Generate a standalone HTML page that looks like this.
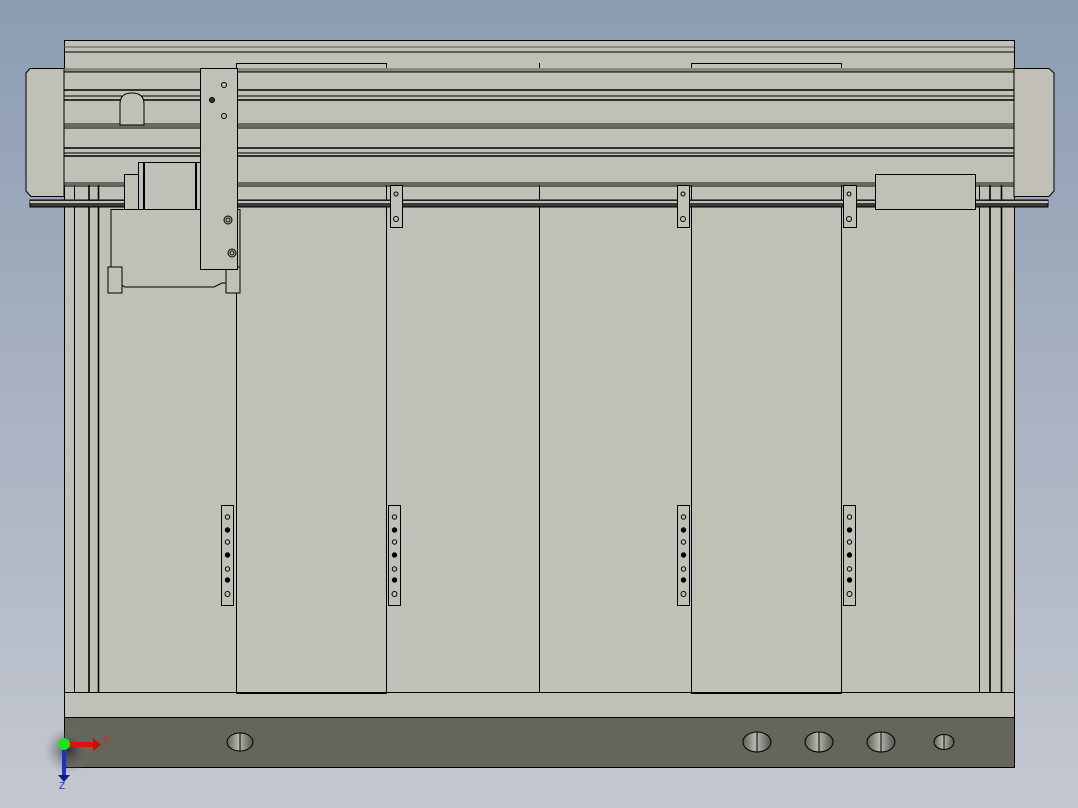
<!DOCTYPE html>
<html><head><meta charset="utf-8"><style>
html,body{margin:0;padding:0;width:1078px;height:808px;overflow:hidden;background:linear-gradient(#8d9cb2,#c4c8d0);}
svg{display:block}
</style></head><body>
<svg width="1078" height="808" viewBox="0 0 1078 808" xmlns="http://www.w3.org/2000/svg">
<defs>
<linearGradient id="hole" x1="0" x2="1"><stop offset="0" stop-color="#5f5f58"/><stop offset="0.45" stop-color="#b8b8b0"/><stop offset="1" stop-color="#55554e"/></linearGradient>
<radialGradient id="sh"><stop offset="0" stop-color="#222" stop-opacity=".8"/><stop offset="1" stop-color="#888" stop-opacity="0"/></radialGradient>
</defs>
<g stroke="#000" stroke-width="1" fill="#c0c0b6">
<!-- main frame -->
<rect x="64.5" y="40.5" width="950" height="727"/>
<line x1="64" y1="47" x2="1014" y2="47" stroke="#555"/>
<line x1="64" y1="52" x2="1014" y2="52"/>
<!-- inner verticals -->
<line x1="74.5" y1="182" x2="74.5" y2="692"/>
<line x1="89" y1="182" x2="89" y2="692" stroke-width="1.6"/>
<line x1="98.5" y1="182" x2="98.5" y2="692" stroke-width="1.6"/>
<line x1="979.5" y1="182" x2="979.5" y2="692"/>
<line x1="990" y1="182" x2="990" y2="692" stroke-width="1.6"/>
<line x1="1001.5" y1="182" x2="1001.5" y2="692" stroke-width="1.6"/>
<!-- panels -->
<rect x="236.5" y="63.5" width="150" height="630"/>
<rect x="691.5" y="63.5" width="150" height="630"/>
<line x1="539.5" y1="63" x2="539.5" y2="692"/>
<line x1="64" y1="692.5" x2="1014" y2="692.5"/>
<!-- bottom band -->
<rect x="64.5" y="717.5" width="950" height="50" fill="#65655b"/>
<!-- top beams -->
<rect x="40" y="68.5" width="1000" height="114" fill="#c0c0b6"/>
<rect x="40" y="68" width="1000" height="4" fill="#8a8a82" stroke="none"/>
<line x1="40" y1="72" x2="1040" y2="72"/>
<line x1="64" y1="90" x2="1014" y2="90" stroke-width="1.6"/>
<line x1="64" y1="96" x2="1014" y2="96"/>
<line x1="64" y1="100" x2="1014" y2="100" stroke-width="1.6"/>
<rect x="64" y="123" width="950" height="4" fill="#6a6a62" stroke="none"/>
<line x1="64" y1="128" x2="1014" y2="128"/>
<line x1="64" y1="148" x2="1014" y2="148" stroke-width="1.6"/>
<line x1="64" y1="153" x2="1014" y2="153"/>
<line x1="64" y1="156" x2="1014" y2="156" stroke-width="1.6"/>
<rect x="64" y="182" width="950" height="3" fill="#6a6a62" stroke="none"/>
<line x1="64" y1="186" x2="1014" y2="186"/>
<!-- end plates -->
<path d="M30 68.5 L64 68.5 L64 196.5 L31 196.5 L26 191 L26 73 Z"/>
<path d="M1014 68.5 L1049 68.5 L1054 73 L1054 191 L1049 196.5 L1014 196.5 Z"/>
<!-- rod -->
<rect x="30" y="200" width="1018" height="7" fill="#3a3a36"/>
<line x1="30" y1="202" x2="1048" y2="202" stroke="#c0c0b6" stroke-width="2"/>
<!-- knob -->
<path d="M120 125 L120 104 Q120 93 132 93 Q144 93 144 104 L144 125 Z"/>
<!-- motor -->
<rect x="124.5" y="174.5" width="14" height="35"/>
<rect x="138.5" y="162.5" width="62" height="47"/>
<line x1="144" y1="163" x2="144" y2="209" stroke-width="2"/>
<line x1="196" y1="163" x2="196" y2="209" stroke-width="2"/>
<path d="M111 209.5 L240 209.5 L240 275 L232 283 L222 283 L214 287 L125 287 L118 283 L111 276 Z"/>
<rect x="108" y="267" width="14" height="26"/>
<rect x="226" y="267" width="14" height="26"/>
<!-- carriage plate -->
<rect x="200.5" y="68.5" width="37" height="201"/>
<circle cx="224" cy="85" r="2.5" fill="none"/>
<circle cx="212" cy="100" r="2.5" fill="#333"/>
<circle cx="224" cy="116" r="2.5" fill="none"/>
<circle cx="228" cy="220" r="4" fill="none"/><circle cx="228" cy="220" r="2" fill="none"/>
<circle cx="232" cy="253" r="4" fill="none"/><circle cx="232" cy="253" r="2" fill="none"/>
<!-- slider block right -->
<rect x="875.5" y="174.5" width="100" height="35"/>
<!-- upper brackets -->
<g>
<rect x="390.5" y="185.5" width="12" height="42"/><circle cx="396" cy="194" r="2" fill="none"/><circle cx="396" cy="219" r="2.5" fill="none"/>
<rect x="677.5" y="185.5" width="12" height="42"/><circle cx="683" cy="194" r="2" fill="none"/><circle cx="683" cy="219" r="2.5" fill="none"/>
<rect x="843.5" y="185.5" width="13" height="42"/><circle cx="849" cy="194" r="2" fill="none"/><circle cx="849" cy="219" r="2.5" fill="none"/>
</g>
<!-- lower brackets -->
<g id="lb">
<rect x="221.5" y="505.5" width="12" height="100"/>
<circle cx="227.5" cy="517" r="2.2" fill="none"/>
<circle cx="227.5" cy="530" r="2.2" fill="#000"/>
<circle cx="227.5" cy="542" r="2.2" fill="none"/>
<circle cx="227.5" cy="555" r="2.2" fill="#000"/>
<circle cx="227.5" cy="569" r="2.2" fill="none"/>
<circle cx="227.5" cy="580" r="2.2" fill="#000"/>
<circle cx="227.5" cy="594" r="2.5" fill="none"/>
</g>
<use href="#lb" x="167"/>
<use href="#lb" x="456"/>
<use href="#lb" x="622"/>
<!-- holes -->
<g fill="url(#hole)">
<ellipse cx="240" cy="742" rx="13" ry="9"/><line x1="240" y1="733" x2="240" y2="751"/>
<ellipse cx="757" cy="742" rx="14" ry="10"/><line x1="757" y1="732" x2="757" y2="752"/>
<ellipse cx="819" cy="742" rx="14" ry="10"/><line x1="819" y1="732" x2="819" y2="752"/>
<ellipse cx="881" cy="742" rx="14" ry="10"/><line x1="881" y1="732" x2="881" y2="752"/>
<ellipse cx="944" cy="742" rx="10" ry="7.5"/><line x1="944" y1="735" x2="944" y2="749"/>
</g>
</g>
<!-- triad -->
<circle cx="68" cy="750" r="24" fill="url(#sh)"/>
<rect x="62" y="745" width="4" height="30" fill="#2030c0"/>
<path d="M58 775 L70 775 L64 782 Z" fill="#102080"/>
<rect x="64" y="742" width="30" height="5" fill="#e01010"/>
<path d="M93 738 L101 744.5 L93 751 Z" fill="#c01010"/>
<circle cx="64" cy="744" r="6" fill="#20e020"/>
<text x="103" y="743" font-family="Liberation Sans,sans-serif" font-size="10" fill="#e02020">X</text>
<text x="59" y="789" font-family="Liberation Sans,sans-serif" font-size="10" fill="#2030d0">Z</text>
</svg>
</body></html>
